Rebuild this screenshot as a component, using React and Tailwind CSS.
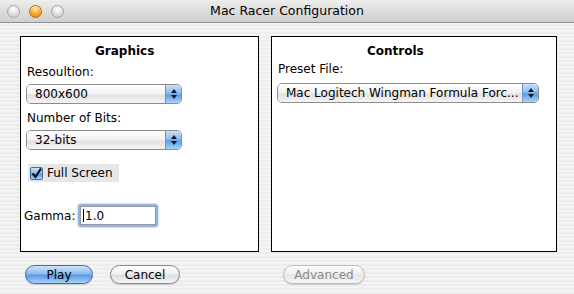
import React from 'react';

const font = "font-['Lucida_Grande','DejaVu_Sans',sans-serif]";

// Traffic light dot
const Light = ({ tone }) => (
    <span
        className={
            tone === 'amber'
                ? 'w-[13px] h-[13px] rounded-full border border-[#b86a0e] bg-[radial-gradient(circle_at_50%_30%,#ffe9a6_0%,#f7b132_45%,#e07d0a_100%)] shadow-[inset_0_1px_1px_rgba(255,255,255,0.7)]'
                : 'w-[13px] h-[13px] rounded-full border border-[#a6a6a6] bg-[radial-gradient(circle_at_50%_30%,#ffffff_0%,#e2e2e2_50%,#c2c2c2_100%)]'
        }
    />
);

// Aqua popup menu
const Popup = ({ label, width }) => (
    <div className={`flex h-[20px] rounded-[5px] border border-[#8d8d8d] overflow-hidden ${width}`}>
        <div className="flex-1 flex items-center pl-[8px] text-[12px] text-black bg-[linear-gradient(to_bottom,#ffffff_0%,#f1f1f1_50%,#e1e1e1_55%,#f4f4f4_100%)] whitespace-nowrap overflow-hidden">
            {label}
        </div>
        <div className="w-[16px] flex flex-col items-center justify-center gap-[2px] border-l border-[#6d93c4] bg-[linear-gradient(to_bottom,#c9def8_0%,#8fbcf0_45%,#5f9ce6_55%,#a9d2fa_100%)]">
            <svg width="6" height="4" viewBox="0 0 6 4"><path d="M0 4 L3 0 L6 4 Z" fill="#1a1a1a" /></svg>
            <svg width="6" height="4" viewBox="0 0 6 4"><path d="M0 0 L3 4 L6 0 Z" fill="#1a1a1a" /></svg>
        </div>
    </div>
);

const Button = ({ label, kind, width }) => {
    const styles = {
        blue: 'border-[#3f6ea6] text-black bg-[linear-gradient(to_bottom,#cfe3fa_0%,#8dbbf0_45%,#5c98e4_55%,#a5d2fb_100%)]',
        white: 'border-[#8a8a8a] text-black bg-[linear-gradient(to_bottom,#ffffff_0%,#f1f1f1_45%,#dedede_55%,#f6f6f6_100%)]',
        disabled: 'border-[#bdbdbd] text-[#8a8a8a] bg-[linear-gradient(to_bottom,#fbfbfb_0%,#f0f0f0_45%,#e6e6e6_55%,#f6f6f6_100%)]',
    };
    return (
        <div className={`h-[19px] rounded-full border flex items-center justify-center text-[12px] shadow-[0_1px_1px_rgba(0,0,0,0.15)] ${styles[kind]} ${width}`}>
            {label}
        </div>
    );
};

export default function App() {
    return (
        <div className={`w-[574px] h-[294px] flex flex-col overflow-hidden ${font} bg-[repeating-linear-gradient(to_bottom,#ededed_0px,#ededed_2px,#f4f4f4_2px,#f4f4f4_4px)]`}>
            {/* Title bar */}
            <div className="h-[23px] flex items-center border-b border-[#8f8f8f] bg-[linear-gradient(to_bottom,#eeeeee_0%,#dddddd_50%,#cfcfcf_100%)] relative">
                <div className="flex items-center gap-[9px] pl-[7px]">
                    <Light />
                    <Light tone="amber" />
                    <Light />
                </div>
                <div className="absolute inset-0 flex items-center justify-center text-[12.5px] text-black">
                    Mac Racer Configuration
                </div>
            </div>

            {/* Panels */}
            <div className="flex gap-[12px] pl-[20px] pt-[13px]">
                <div className="w-[239px] h-[216px] bg-white border border-black flex flex-col">
                    <div className="pl-[74px] pt-[6px] text-[12px] font-bold leading-[16px]">Graphics</div>
                    <div className="pl-[6px] pt-[5px] text-[12px] leading-[16px]">Resoultion:</div>
                    <div className="pl-[5px] pt-[4px]">
                        <Popup label="800x600" width="w-[156px]" />
                    </div>
                    <div className="pl-[6px] pt-[6px] text-[12px] leading-[16px]">Number of Bits:</div>
                    <div className="pl-[5px] pt-[4px]">
                        <Popup label="32-bits" width="w-[156px]" />
                    </div>
                    <div className="pl-[7px] pt-[14px]">
                        <div className="w-[91px] h-[18px] bg-[#e6e6e6] flex items-center gap-[4px] pl-[2px] text-[12px]">
                            <span className="w-[13px] h-[13px] rounded-[2px] border border-[#3f6ea6] bg-[linear-gradient(to_bottom,#cfe3fa_0%,#8dbbf0_45%,#5c98e4_55%,#a5d2fb_100%)] flex items-center justify-center">
                                <svg width="11" height="11" viewBox="0 0 11 11">
                                    <path d="M1.5 5.5 L4.5 9 L10 0.5" fill="none" stroke="#111" strokeWidth="2.2" />
                                </svg>
                            </span>
                            Full Screen
                        </div>
                    </div>
                    <div className="flex items-center pl-[3px] pt-[22px]">
                        <span className="text-[12px] w-[54px]">Gamma:</span>
                        <div className="w-[80px] h-[23px] rounded-[3px] border-2 border-[#8fb4e0] shadow-[0_0_2px_#6a9bd6] flex items-center">
                            <div className="w-full h-full border border-[#9a9a9a] bg-white flex items-center pl-[2px] text-[12px]">
                                <span className="w-px h-[13px] bg-black mr-[1px]" />
                                1.0
                            </div>
                        </div>
                    </div>
                </div>

                <div className="w-[286px] h-[216px] bg-white border border-black flex flex-col">
                    <div className="pl-[95px] pt-[6px] text-[12px] font-bold leading-[16px]">Controls</div>
                    <div className="pl-[6px] pt-[2px] text-[12px] leading-[16px]">Preset File:</div>
                    <div className="pl-[5px] pt-[6px]">
                        <Popup label="Mac Logitech Wingman Formula Forc..." width="w-[262px]" />
                    </div>
                </div>
            </div>

            {/* Buttons */}
            <div className="flex items-center pl-[25px] pt-[13px]">
                <Button label="Play" kind="blue" width="w-[68px]" />
                <div className="ml-[17px]">
                    <Button label="Cancel" kind="white" width="w-[70px]" />
                </div>
                <div className="ml-[103px]">
                    <Button label="Advanced" kind="disabled" width="w-[82px]" />
                </div>
            </div>
        </div>
    );
}
